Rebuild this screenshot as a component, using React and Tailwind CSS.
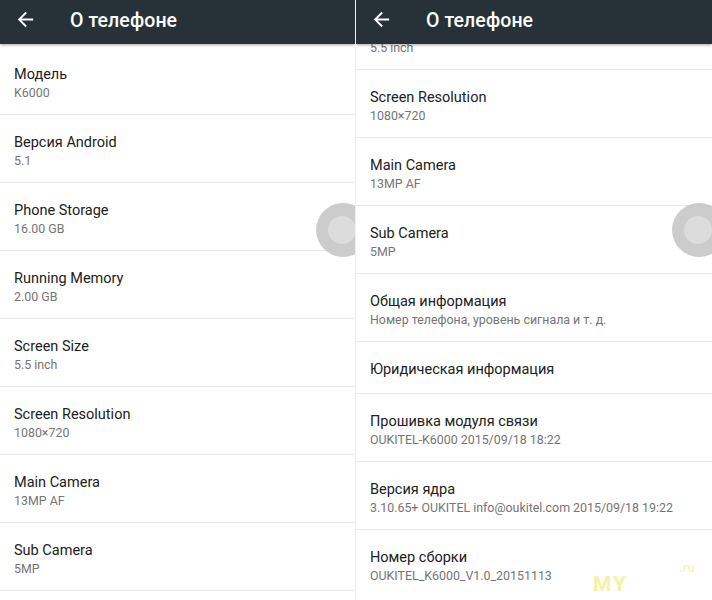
import React from 'react';

const leftRows = [
  { title: 'Модель', sub: 'K6000' },
  { title: 'Версия Android', sub: '5.1' },
  { title: 'Phone Storage', sub: '16.00 GB' },
  { title: 'Running Memory', sub: '2.00 GB' },
  { title: 'Screen Size', sub: '5.5 inch' },
  { title: 'Screen Resolution', sub: '1080×720' },
  { title: 'Main Camera', sub: '13MP AF' },
  { title: 'Sub Camera', sub: '5MP' },
];

const rightRows = [
  { title: 'Screen Resolution', sub: '1080×720' },
  { title: 'Main Camera', sub: '13MP AF' },
  { title: 'Sub Camera', sub: '5MP' },
  { title: 'Общая информация', sub: 'Номер телефона, уровень сигнала и т. д.' },
  { title: 'Юридическая информация' },
  { title: 'Прошивка модуля связи', sub: 'OUKITEL-K6000 2015/09/18 18:22' },
  { title: 'Версия ядра', sub: '3.10.65+ OUKITEL info@oukitel.com 2015/09/18 19:22' },
  { title: 'Номер сборки', sub: 'OUKITEL_K6000_V1.0_20151113' },
];

function Header() {
  return (
    <div className="relative z-10 h-[44px] bg-[#263238] flex items-center shadow-[0_1px_3px_rgba(0,0,0,0.35)]">
      <svg width="23" height="23" viewBox="0 0 24 24" className="ml-[14px] mb-[6px] shrink-0">
        <path d="M20 11H7.83l5.59-5.59L12 4l-8 8 8 8 1.41-1.41L7.83 13H20v-2z" fill="#ffffff" />
      </svg>
      <span className="ml-[33px] mb-[3px] text-white text-[19.5px] leading-[24px] font-medium tracking-[0.1px]">О телефоне</span>
    </div>
  );
}

function Row({ title, sub, hideTitle = false, className = '' }) {
  return (
    <div
      className={`flex flex-col justify-center pl-[14px] pt-[5px] border-b border-[#ebebeb] ${
        sub ? 'h-[68px]' : 'h-[52px]'
      } ${className}`}
    >
      <div className={`text-[14.5px] leading-[18px] text-[#212121] whitespace-nowrap ${hideTitle ? 'invisible' : ''}`}>
        {title}
      </div>
      {sub && <div className="text-[12.4px] leading-[17px] text-[#757575] whitespace-nowrap">{sub}</div>}
    </div>
  );
}

function FloatButton() {
  return (
    <div className="absolute left-[316px] top-[203px] w-[54px] h-[54px] rounded-full bg-[#c6c6c6]/90 flex items-center justify-center">
      <div className="w-[28px] h-[28px] rounded-full bg-[#dcdcdc] mr-[3px]" />
    </div>
  );
}

export default function App() {
  return (
    <div className="w-[712px] h-[600px] flex bg-white overflow-hidden relative" style={{ fontFamily: 'Roboto, "Noto Sans", sans-serif' }}>
      <div className="relative w-[356px] h-full overflow-hidden border-r border-[#efefef]">
        <Header />
        <div className="pt-[3px]">
          {leftRows.map((r) => (
            <Row key={r.title} {...r} />
          ))}
        </div>
        <FloatButton />
      </div>

      <div className="relative w-[356px] h-full overflow-hidden">
        <Header />
        <div>
          {/* scrolled list: only the bottom of this row peeks out under the bar */}
          <Row title="Screen Size" sub="5.5 inch" hideTitle className="-mt-[42px]" />
          {rightRows.map((r) => (
            <Row key={r.title} {...r} className={r.title === 'Номер сборки' ? 'border-b-0' : ''} />
          ))}
        </div>
        <FloatButton />
        <span className="absolute left-[237px] top-[572px] text-[21px] leading-[24px] font-bold text-[#f4ee8c]/80 tracking-[2px]">MY</span>
        <span className="absolute left-[323px] top-[560px] text-[13px] leading-[16px] font-bold text-[#f6f1a8]/80">.ru</span>
      </div>
    </div>
  );
}
